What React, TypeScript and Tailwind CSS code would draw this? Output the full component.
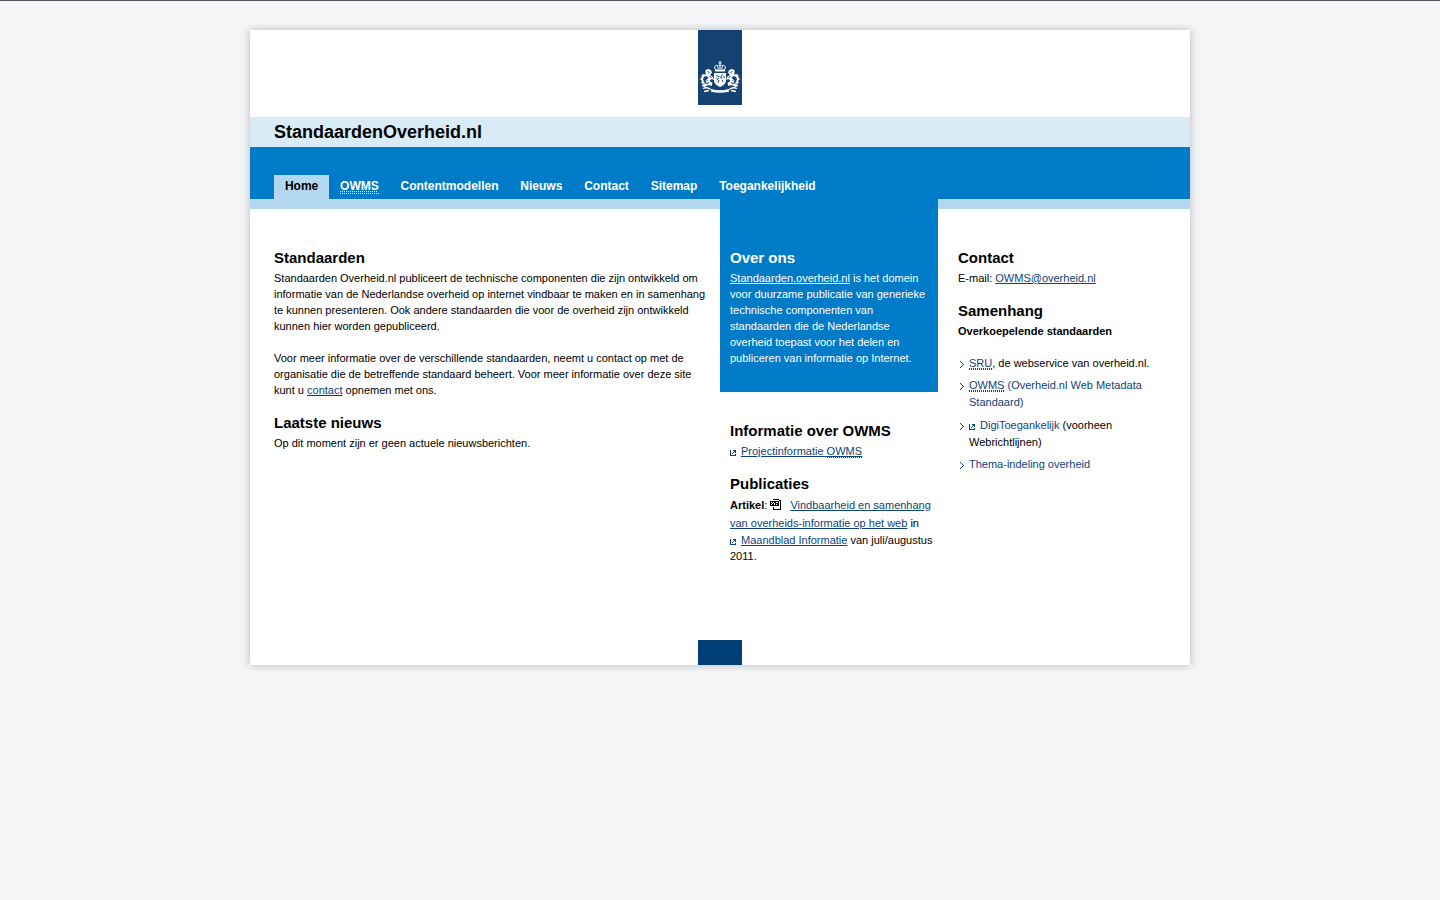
import React from "react";

const link = "text-[#0d437a] underline";

function Ext() {
  return (
    <svg className="mr-[5px] inline-block align-[-1px]" width="6" height="6" viewBox="0 0 6 6" shapeRendering="crispEdges" fill="#0d437a">
      <path d="M0 0h1v6h-1zM0 5h6v1h-6zM3 0h3v1h-3zM5 0h1v3h-1zM4 1h1v1h-1zM3 2h1v1h-1zM2 3h1v1h-1zM5 4h1v2h-1z" />
    </svg>
  );
}

function Pdf() {
  return (
    <svg className="mr-[9px] inline-block align-[-1px]" width="11" height="11" viewBox="0 0 11 11" shapeRendering="crispEdges" fill="#000">
      <path d="M3 0h6v1h-6zM9 1h1v1h-1zM10 1h1v10h-1zM3 10h8v1h-8zM3 8h1v3h-1zM0 2h9v5h-9z" />
      <path fill="#fff" d="M1 3h1v1h-1zM3 3h1v1h-1zM2 4h1v1h-1zM1 5h1v1h-1zM4 4h1v2h-1zM6 3h2v1h-2zM6 5h1v1h-1z" />
    </svg>
  );
}

function Arrow() {
  return (
    <svg className="mt-[6px] mr-[5px] ml-[2px] shrink-0" width="4" height="7" viewBox="0 0 4 7" shapeRendering="crispEdges" fill="#0d437a">
      <path d="M0 0h1v1h-1zM1 1h1v1h-1zM2 2h1v1h-1zM3 3h1v1h-1zM2 4h1v1h-1zM1 5h1v1h-1zM0 6h1v1h-1z" />
    </svg>
  );
}

function Supporter() {
  return (
    <g fill="#fff" stroke="none">
      <path d="M7.500 12l2.500-1l3 1l1 3l-2 2l3 2l1 3l-2.500-1l-2 2l3 2l-1 3l-3-1l-4 2l-3-1l2-2l3-1l-1-3l3-2l-2-2l-3 1l-2-2l2-1l2 1z" />
      <path d="M3 18l2-1l1 2l-1 2l1 3l1 1l-2 1l-2-1l1-2l-2-2l2-2z" />
      <path d="M9.500 13.500l2 1M7 21l2.500 1.500M11.500 18l2 2M8 26l3-1.500" stroke="#154273" strokeWidth="1" />
    </g>
  );
}

function Crest() {
  return (
    <svg width="44" height="38" viewBox="0 0 44 38" fill="none" stroke="#fff">
      <path d="M22 3v4M20.500 5h3M17.500 12l-1-3l2-2l2 1l1.500-1l1.500 1l2-1l2 2l-1 3M19.500 8.500l1 3M24.500 8.500l-1 3M22 8v3" />
      <path d="M17 12.500h10" strokeWidth="2" />
      <path d="M16 15h12v7c0 4-3 5.500-6 7c-3-1.500-6-3-6-7z" fill="#fff" stroke="none" />
      <path d="M18.500 17l2 2l1-1M24.500 16.500l-2 3l2 1M21 20l-2.500 2M21 22l-1 3M24 22l1 2M18 20h1M26 18v2" stroke="#154273" />
      <Supporter />
      <g transform="translate(44 0) scale(-1 1)"><Supporter /></g>
      <path d="M5 30.500c4-2 6 0 8 1c6 2 12 2 18 0c2-1 4-3 8-1M6 33.500l5-1M38 33.500l-5-1M13 33c6 1.500 12 1.500 18 0" strokeWidth="1.300" />
    </svg>
  );
}

const H = ({ children }: { children: React.ReactNode }) => (
  <h2 className="text-[15px] leading-5 font-bold">{children}</h2>
);

export default function App() {
  return (
    <div className="min-h-screen border-t border-[#55555d] bg-[#f3f5f7] pt-[29px] font-['Liberation_Sans',Arial,sans-serif] text-[11px] leading-4 text-black">
      <div className="mx-auto flex h-[635px] w-[940px] flex-col bg-white shadow-[0_0_8px_rgba(0,0,0,0.25)]">
        <header>
          <div className="flex h-[87px] justify-center">
            <div className="h-[75px] w-[44px] bg-[#154273] pt-[28px]"><Crest /></div>
          </div>
          <div className="h-[30px] bg-[#d9ebf7] pl-6 text-[18px] leading-[30px] font-bold">StandaardenOverheid.nl</div>
          <nav className="flex h-[62px] items-end border-b-[10px] border-[#b2d7ee] bg-[#007bc7] pl-6 text-[12px] font-bold text-white">
            <a className="h-6 bg-[#b2d7ee] px-[10.920px] leading-[22px] text-black">Home</a>
            <a className="h-6 px-[10.920px] leading-[22px]"><span className="border-b border-dotted border-white underline decoration-dotted">OWMS</span></a>
            <a className="h-6 px-[10.920px] leading-[22px]">Contentmodellen</a>
            <a className="h-6 px-[10.920px] leading-[22px]">Nieuws</a>
            <a className="h-6 px-[10.920px] leading-[22px]">Contact</a>
            <a className="h-6 px-[10.920px] leading-[22px]">Sitemap</a>
            <a className="h-6 px-[10.920px] leading-[22px]">Toegankelijkheid</a>
          </nav>
        </header>
        <main className="flex h-[431px] items-start">
          <section className="w-[470px] pt-[39px] pr-[10px] pl-6">
            <H>Standaarden</H>
            <p className="mt-[2px]">Standaarden Overheid.nl publiceert de technische componenten die zijn ontwikkeld om<br />informatie van de Nederlandse overheid op internet vindbaar te maken en in samenhang<br />te kunnen presenteren. Ook andere standaarden die voor de overheid zijn ontwikkeld<br />kunnen hier worden gepubliceerd.</p>
            <p className="mt-4 mb-[15px]">Voor meer informatie over de verschillende standaarden, neemt u contact op met de<br />organisatie die de betreffende standaard beheert. Voor meer informatie over deze site<br />kunt u <a className={link}>contact</a> opnemen met ons.</p>
            <H>Laatste nieuws</H>
            <p className="mt-[2px]">Op dit moment zijn er geen actuele nieuwsberichten.</p>
          </section>
          <section className="-mt-[10px] w-[218px]">
            <div className="h-[193px] bg-[#007bc7] px-[10px] pt-[49px] text-white">
              <H>Over ons</H>
              <p className="mt-[2px]"><a className="underline">Standaarden.overheid.nl</a> is het domein<br />voor duurzame publicatie van generieke<br />technische componenten van<br />standaarden die de Nederlandse<br />overheid toepast voor het delen en<br />publiceren van informatie op Internet.</p>
            </div>
            <div className="pt-[29px] pl-[10px] whitespace-nowrap">
              <H>Informatie over OWMS</H>
              <p className="mt-[2px] mb-[15px]"><Ext /><a className={link}>Projectinformatie <span className="border-b border-dotted border-[#0d437a]">OWMS</span></a></p>
              <H>Publicaties</H>
              <p className="mt-[2px] leading-[18px]"><b>Artikel</b>: <Pdf /><a className={link}>Vindbaarheid en samenhang</a><br /><a className={link}>van overheids-informatie op het web</a> in</p>
              <p><Ext /><a className={link}>Maandblad Informatie</a> van juli/augustus<br />2011.</p>
            </div>
          </section>
          <section className="w-[252px] pt-[39px] pl-5">
            <H>Contact</H>
            <p className="mt-[2px] mb-[15px]">E-mail: <a className={link}>OWMS@overheid.nl</a></p>
            <H>Samenhang</H>
            <p className="mt-[2px] font-bold">Overkoepelende standaarden</p>
            <ul className="mt-4 leading-[17px]">
              <li className="mb-[5px] flex"><Arrow /><span><a className="border-b border-dotted border-[#0d437a] text-[#0d437a] underline decoration-dotted">SRU</a>, de webservice van overheid.nl.</span></li>
              <li className="mb-[6px] flex"><Arrow /><a className="text-[#0d437a]"><span className="border-b border-dotted border-[#0d437a] underline decoration-dotted">OWMS</span> (Overheid.nl Web Metadata<br />Standaard)</a></li>
              <li className="mb-[5px] flex"><Arrow /><span><Ext /><a className="text-[#0d437a]">DigiToegankelijk</a> (voorheen<br />Webrichtlijnen)</span></li>
              <li className="flex"><Arrow /><a className="text-[#0d437a]">Thema-indeling overheid</a></li>
            </ul>
          </section>
        </main>
        <footer className="flex h-[25px] justify-center"><div className="w-[44px] bg-[#013f77]" /></footer>
      </div>
    </div>
  );
}
